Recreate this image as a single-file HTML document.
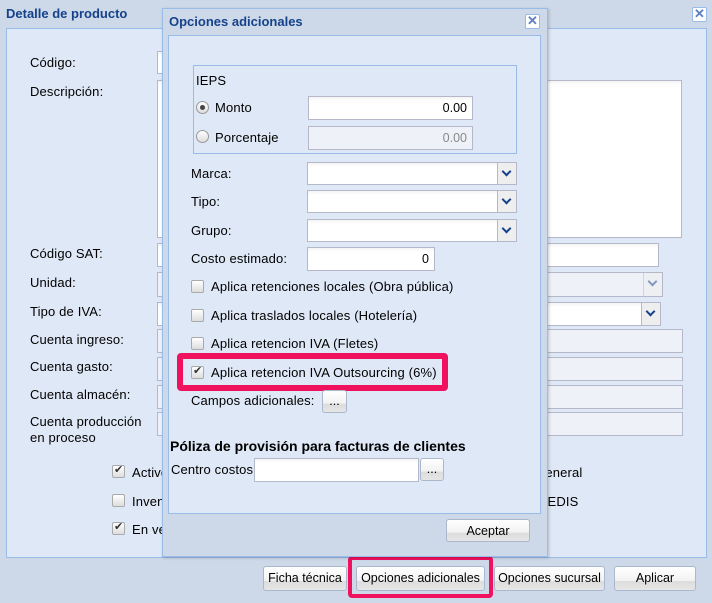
<!DOCTYPE html>
<html><head><meta charset="utf-8"><style>
*{box-sizing:border-box}
body{margin:0;width:712px;height:603px;background:#cdd9e8;font-family:"Liberation Sans",Arial,sans-serif;font-size:12px;color:#000;position:relative;overflow:hidden}
.a{position:absolute}
.ttl{font-weight:bold;color:#15428b;font-size:13px}
.inp{position:absolute;background:linear-gradient(#f4f4f4,#fff 4px);border:1px solid #b5b8c8}
.dis{background:#eef2f8}
.lab{position:absolute;font-size:13px;letter-spacing:0.15px}
.arr{position:absolute;top:0;right:0;bottom:0;width:19px;border-left:1px solid #b5b8c8;background:#eee}
.arr:after{content:"";position:absolute;left:5px;top:5px;width:5px;height:5px;border-right:2px solid #15428b;border-bottom:2px solid #15428b;transform:rotate(45deg)}
.btn{position:absolute;border:1px solid #a9b8cc;border-radius:3px;background:linear-gradient(#fff,#f2f2f2 60%,#dcdcdc 61%,#e6e6e6);text-align:center;font-size:12.5px;line-height:22px}
.cb{position:absolute;width:13px;height:13px;border:1px solid #aaa;border-radius:2px;background:linear-gradient(#fff,#ddd)}
.ck:after{content:"✔";position:absolute;left:1px;top:-3px;font-size:11px;color:#333}
.rd{position:absolute;width:13px;height:13px;border:1px solid #999;border-radius:50%;background:linear-gradient(#fff,#ddd)}
.x{position:absolute;width:15px;height:15px;border:1px solid #99bbe8;border-radius:2px;background:#fff;color:#5d7fc0;font-size:13px;line-height:12px;text-align:center;font-weight:bold}
</style></head><body>
<div class="a ttl" style="left:6px;top:6px">Detalle de producto</div>
<div class="x" style="left:692px;top:7px">✕</div>
<div class="a" style="left:6px;top:28px;width:701px;height:530px;background:#dfe8f6;border:1px solid #99bbe8"></div>
<div class="lab" style="left:30px;top:55px">Código:</div>
<div class="lab" style="left:30px;top:84px">Descripción:</div>
<div class="lab" style="left:30px;top:246px">Código SAT:</div>
<div class="lab" style="left:30px;top:275px">Unidad:</div>
<div class="lab" style="left:30px;top:304px">Tipo de IVA:</div>
<div class="lab" style="left:30px;top:332px">Cuenta ingreso:</div>
<div class="lab" style="left:30px;top:359px">Cuenta gasto:</div>
<div class="lab" style="left:30px;top:387px">Cuenta almacén:</div>
<div class="lab" style="left:30px;top:414px;line-height:16px">Cuenta producción<br>en proceso</div>
<div class="inp" style="left:157px;top:51px;width:20px;height:23px"></div>
<div class="inp" style="left:157px;top:80px;width:525px;height:158px"></div>
<div class="inp" style="left:157px;top:243px;width:502px;height:24px"></div>
<div class="inp dis" style="left:157px;top:272px;width:506px;height:25px"><div class="arr" style="opacity:.5"></div></div>
<div class="inp" style="left:157px;top:302px;width:504px;height:24px"><div class="arr"></div></div>
<div class="inp dis" style="left:157px;top:329px;width:526px;height:24px"></div>
<div class="inp dis" style="left:157px;top:357px;width:526px;height:24px"></div>
<div class="inp dis" style="left:157px;top:385px;width:526px;height:24px"></div>
<div class="inp dis" style="left:157px;top:412px;width:526px;height:24px"></div>
<div class="cb ck" style="left:112px;top:465px"></div><div class="lab" style="left:132px;top:465px">Activo</div>
<div class="cb" style="left:112px;top:494px"></div><div class="lab" style="left:132px;top:494px">Inventario</div>
<div class="cb ck" style="left:112px;top:522px"></div><div class="lab" style="left:132px;top:522px">En venta</div>
<div class="lab" style="left:538px;top:465px">general</div>
<div class="lab" style="left:538px;top:494px">CEDIS</div>
<div class="btn" style="left:263px;top:566px;width:84px;height:25px">Ficha técnica</div>
<div class="btn" style="left:356px;top:566px;width:129px;height:25px">Opciones adicionales</div>
<div class="btn" style="left:494px;top:566px;width:111px;height:25px">Opciones sucursal</div>
<div class="btn" style="left:614px;top:566px;width:82px;height:25px">Aplicar</div>
<div class="a" style="left:348px;top:556px;width:145px;height:42px;border:4px solid #f0115f;border-radius:4px"></div>

<!-- modal -->
<div class="a" style="left:162px;top:8px;width:386px;height:549px;background:#cdd9e8;border:1px solid #99bbe8;box-shadow:1px 1px 3px rgba(0,0,0,.2)"></div>
<div class="a ttl" style="left:169px;top:14px">Opciones adicionales</div>
<div class="x" style="left:525px;top:14px">✕</div>
<div class="a" style="left:168px;top:35px;width:373px;height:479px;background:#dfe8f6;border:1px solid #99bbe8"></div>
<div class="a" style="left:193px;top:65px;width:324px;height:89px;border:1px solid #99bbe8"></div>
<div class="lab" style="left:196px;top:73px">IEPS</div>
<div class="rd" style="left:196px;top:101px"></div><div class="a" style="left:200px;top:105px;width:5px;height:5px;border-radius:50%;background:#444"></div>
<div class="lab" style="left:215px;top:100px">Monto</div>
<div class="inp" style="left:308px;top:96px;width:165px;height:24px;text-align:right;padding:4px 5px;font-size:12.5px">0.00</div>
<div class="rd" style="left:196px;top:130px"></div>
<div class="lab" style="left:215px;top:130px">Porcentaje</div>
<div class="inp dis" style="left:308px;top:126px;width:165px;height:24px;text-align:right;padding:4px 5px;font-size:12.5px;color:#888">0.00</div>
<div class="lab" style="left:191px;top:166px">Marca:</div>
<div class="lab" style="left:191px;top:194px">Tipo:</div>
<div class="lab" style="left:191px;top:223px">Grupo:</div>
<div class="lab" style="left:191px;top:251px">Costo estimado:</div>
<div class="inp" style="left:307px;top:162px;width:210px;height:23px"><div class="arr"></div></div>
<div class="inp" style="left:307px;top:190px;width:210px;height:23px"><div class="arr"></div></div>
<div class="inp" style="left:307px;top:219px;width:210px;height:23px"><div class="arr"></div></div>
<div class="inp" style="left:307px;top:247px;width:128px;height:24px;text-align:right;padding:4px 5px;font-size:12.5px">0</div>
<div class="cb" style="left:191px;top:280px"></div><div class="lab" style="left:211px;top:279px">Aplica retenciones locales (Obra pública)</div>
<div class="cb" style="left:191px;top:309px"></div><div class="lab" style="left:211px;top:308px">Aplica traslados locales (Hotelería)</div>
<div class="cb" style="left:191px;top:337px"></div><div class="lab" style="left:211px;top:336px">Aplica retencion IVA (Fletes)</div>
<div class="a" style="left:177px;top:353px;width:271px;height:38px;border:6px solid #f0115f;border-radius:4px"></div>
<div class="cb ck" style="left:191px;top:366px"></div><div class="lab" style="left:211px;top:365px">Aplica retencion IVA Outsourcing (6%)</div>
<div class="lab" style="left:191px;top:393px">Campos adicionales:</div>
<div class="btn" style="left:322px;top:390px;width:25px;height:23px;line-height:20px">...</div>
<div class="a" style="left:170px;top:438px;font-weight:bold;font-size:14px">Póliza de provisión para facturas de clientes</div>
<div class="lab" style="left:171px;top:462px">Centro costos</div>
<div class="inp" style="left:254px;top:458px;width:165px;height:24px"></div>
<div class="btn" style="left:420px;top:458px;width:24px;height:23px;line-height:20px">...</div>
<div class="btn" style="left:446px;top:519px;width:84px;height:23px">Aceptar</div>
</body></html>
